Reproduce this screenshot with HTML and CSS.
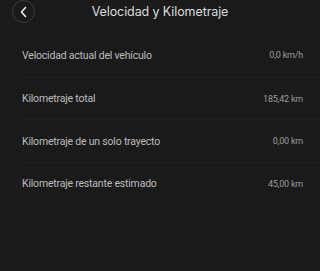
FILE: index.html
```html
<!DOCTYPE html>
<html>
<head>
<meta charset="utf-8">
<link rel="stylesheet" href="styles.css">
</head>
<body>
<div class="page">
  <header class="header">
    <button class="back" aria-label="Atrás">
      <svg width="12" height="12" viewBox="0 0 12 12"><path d="M7.5 1.5 L3.5 6 L7.5 10.5" fill="none" stroke="#f2f2f2" stroke-width="1.6" stroke-linecap="round" stroke-linejoin="round"/></svg>
    </button>
    <h1 class="title">Velocidad y Kilometraje</h1>
  </header>
  <ul class="list">
    <li class="row"><span class="label">Velocidad actual del vehículo</span><span class="value">0,0 km/h</span></li>
    <li class="row"><span class="label">Kilometraje total</span><span class="value">185,42 km</span></li>
    <li class="row"><span class="label">Kilometraje de un solo trayecto</span><span class="value">0,00 km</span></li>
    <li class="row"><span class="label">Kilometraje restante estimado</span><span class="value">45,00 km</span></li>
  </ul>
</div>
</body>
</html>
```
FILE: styles.css
```css
* { box-sizing: border-box; }
html, body { margin: 0; padding: 0; background: #1a1a1a; }
.page {
  width: 320px;
  height: 271px;
  background: #1a1a1a;
  font-family: Roboto, "Liberation Sans", sans-serif;
  overflow: hidden;
}
.header {
  position: relative;
  height: 23px;
  display: flex;
  align-items: center;
  justify-content: center;
}
.back {
  position: absolute;
  left: 12px;
  top: 0;
  width: 23px;
  height: 23px;
  border-radius: 50%;
  border: 1px solid #3e3e3e;
  background: transparent;
  padding: 0;
  display: flex;
  align-items: center;
  justify-content: center;
}
.title {
  margin: 0;
  font-family: Inter, Roboto, sans-serif;
  font-size: 12.5px;
  font-weight: 400;
  color: #dcdcdc;
  letter-spacing: -0.1px;
}
.list {
  list-style: none;
  margin: 0;
  padding: 11px 0 0 22px;
}
.row {
  height: 42.7px;
  display: flex;
  align-items: center;
  justify-content: space-between;
  padding-right: 17px;
}
.row + .row { border-top: 1px solid #1f1f1f; }
.label {
  font-size: 10.5px;
  color: #bdbdbd;
  letter-spacing: -0.2px;
}
.value {
  font-size: 9px;
  color: #9a9a9a;
  letter-spacing: -0.2px;
}
```
